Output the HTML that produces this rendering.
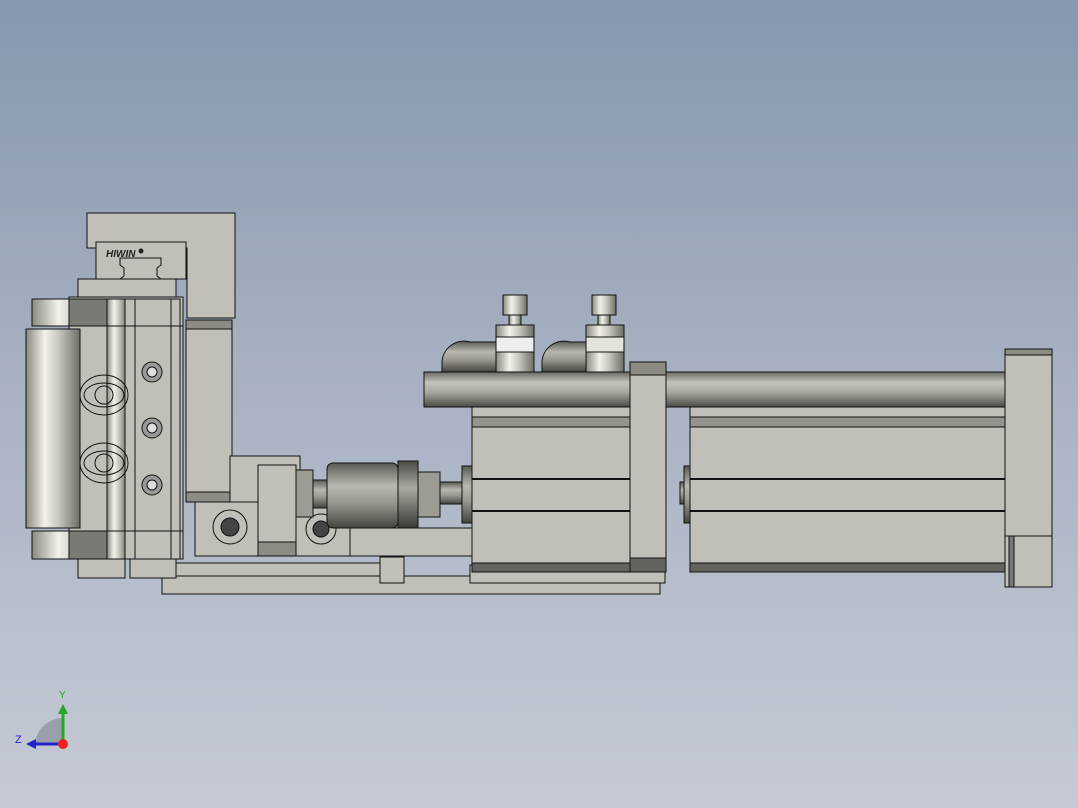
<!DOCTYPE html>
<html><head><style>html,body{margin:0;padding:0}body{width:1078px;height:808px;overflow:hidden;background:linear-gradient(#8797ad,#a9b3c3 50%,#c6cad6)}svg{display:block}</style></head><body>
<svg width="1078" height="808" viewBox="0 0 1078 808" xmlns="http://www.w3.org/2000/svg" font-family="Liberation Sans, sans-serif">
<defs>
<linearGradient id="cv" x1="0" y1="0" x2="1" y2="0"><stop offset="0" stop-color="#8a8a80"/><stop offset=".35" stop-color="#f2f2ea"/><stop offset=".6" stop-color="#c8c8bf"/><stop offset="1" stop-color="#6e6e66"/></linearGradient>
<linearGradient id="ch" x1="0" y1="0" x2="0" y2="1"><stop offset="0" stop-color="#5a5a55"/><stop offset=".35" stop-color="#b8b8b0"/><stop offset=".6" stop-color="#9a9a92"/><stop offset="1" stop-color="#44443f"/></linearGradient>
<linearGradient id="cr" x1="0" y1="0" x2="0" y2="1"><stop offset="0" stop-color="#6a6a64"/><stop offset=".3" stop-color="#c4c4bc"/><stop offset=".6" stop-color="#a4a49c"/><stop offset="1" stop-color="#4a4a45"/></linearGradient>
<linearGradient id="cd" x1="0" y1="0" x2="0" y2="1"><stop offset="0" stop-color="#4a4a46"/><stop offset=".4" stop-color="#aaaaa2"/><stop offset="1" stop-color="#3a3a36"/></linearGradient>
</defs>
<g stroke="#111" stroke-width="1">
<rect x="162" y="576" width="498" height="18" fill="#c0c0b8"/>
<rect x="176" y="563" width="204" height="13" fill="#c0c0b8"/>
<rect x="380" y="557" width="24" height="26" fill="#c0c0b8"/>
<rect x="470" y="565" width="195" height="18" fill="#c0c0b8"/>
<rect x="78" y="557" width="47" height="21" fill="#c0c0b8"/>
<rect x="130" y="557" width="46" height="21" fill="#c0c0b8"/>
<path d="M87 213H235V318H187V248H87Z" fill="#c0c0b8"/>
<rect x="96" y="242" width="90" height="37" fill="#c0c0b8"/>
<text x="106" y="257" font-size="10" font-style="italic" font-weight="bold" fill="#222" stroke="none">HIWIN</text>
<circle cx="141" cy="251" r="2.5" fill="#222" stroke="none"/>
<path d="M120 258H161V265L157 268V276L161 279V288H120V279L124 276V268L120 265Z" fill="#c0c0b8"/>
<rect x="78" y="279" width="98" height="18" fill="#c0c0b8"/>
<rect x="186" y="320" width="46" height="182" fill="#c0c0b8"/>
<rect x="186" y="320" width="46" height="9" fill="#8c8c84"/>
<rect x="186" y="492" width="46" height="10" fill="#8c8c84"/>
<rect x="230" y="456" width="70" height="100" fill="#c0c0b8"/>
<rect x="195" y="502" width="101" height="54" fill="#c0c0b8"/>
<rect x="258" y="465" width="38" height="91" fill="#c0c0b8"/>
<rect x="258" y="542" width="38" height="14" fill="#8c8c84"/>
<circle cx="230" cy="527" r="17" fill="none"/><circle cx="230" cy="527" r="9" fill="#444"/>
<rect x="296" y="502" width="54" height="54" fill="#c0c0b8"/>
<circle cx="321" cy="529" r="15" fill="none"/><circle cx="321" cy="529" r="8" fill="#444"/>
<rect x="350" y="528" width="122" height="28" fill="#c0c0b8"/>
<rect x="69" y="297" width="114" height="262" fill="#c0c0b8"/>
<rect x="32" y="299" width="75" height="27" fill="url(#cv)"/>
<rect x="69" y="299" width="38" height="27" fill="#7a7a74"/>
<rect x="32" y="531" width="75" height="28" fill="url(#cv)"/>
<rect x="69" y="531" width="38" height="28" fill="#7a7a74"/>
<rect x="107" y="299" width="20" height="260" fill="url(#cv)"/>
<rect x="26" y="329" width="54" height="199" fill="url(#cv)"/>
<rect x="125" y="299" width="55" height="260" fill="#c0c0b8"/>
<line x1="135" y1="299" x2="135" y2="559"/><line x1="171" y1="299" x2="171" y2="559"/>
<line x1="69" y1="326" x2="183" y2="326"/><line x1="69" y1="531" x2="183" y2="531"/>
<ellipse cx="104" cy="395" rx="24" ry="20" fill="none"/><ellipse cx="104" cy="395" rx="20" ry="12" fill="none"/><circle cx="104" cy="395" r="9" fill="none"/>
<ellipse cx="104" cy="463" rx="24" ry="20" fill="none"/><ellipse cx="104" cy="463" rx="20" ry="12" fill="none"/><circle cx="104" cy="463" r="9" fill="none"/>
<g fill="#999"><circle cx="152" cy="372" r="10"/><circle cx="152" cy="428" r="10"/><circle cx="152" cy="485" r="10"/></g>
<g fill="#ddd"><circle cx="152" cy="372" r="5"/><circle cx="152" cy="428" r="5"/><circle cx="152" cy="485" r="5"/></g>
<rect x="296" y="470" width="17" height="47" fill="#9c9c94"/>
<rect x="313" y="480" width="14" height="28" fill="url(#ch)"/>
<rect x="327" y="463" width="71" height="65" rx="6" fill="url(#ch)"/>
<rect x="398" y="461" width="20" height="67" fill="url(#cd)"/>
<rect x="418" y="472" width="22" height="45" fill="#9c9c94"/>
<rect x="440" y="482" width="32" height="22" fill="url(#ch)"/>
<rect x="462" y="466" width="10" height="57" fill="url(#ch)"/>
<rect x="680" y="482" width="12" height="22" fill="url(#ch)"/>
<rect x="684" y="466" width="8" height="57" fill="url(#ch)"/>
<path d="M442 372V362A22 22 0 0 1 470 342H500V372Z" fill="url(#ch)"/>
<path d="M542 372V362A22 22 0 0 1 570 342H592V372Z" fill="url(#ch)"/>
<rect x="503" y="295" width="24" height="20" fill="url(#cv)"/>
<rect x="509" y="315" width="12" height="10" fill="url(#cv)"/>
<rect x="496" y="325" width="38" height="12" fill="url(#cv)"/>
<rect x="496" y="337" width="38" height="15" fill="#eee"/>
<rect x="496" y="352" width="38" height="20" fill="url(#cv)"/>
<rect x="592" y="295" width="24" height="20" fill="url(#cv)"/>
<rect x="598" y="315" width="12" height="10" fill="url(#cv)"/>
<rect x="586" y="325" width="38" height="12" fill="url(#cv)"/>
<rect x="586" y="337" width="38" height="15" fill="#e4e4dc"/>
<rect x="586" y="352" width="38" height="20" fill="url(#cv)"/>
<rect x="472" y="407" width="158" height="165" fill="#c0c0b8"/>
<rect x="472" y="417" width="158" height="10" fill="#94948c"/>
<rect x="472" y="563" width="158" height="9" fill="#64645e"/>
<line x1="472" y1="479" x2="630" y2="479" stroke-width="2"/><line x1="472" y1="511" x2="630" y2="511" stroke-width="2"/>
<rect x="690" y="407" width="315" height="165" fill="#c0c0b8"/>
<rect x="690" y="417" width="315" height="10" fill="#94948c"/>
<rect x="690" y="563" width="315" height="9" fill="#64645e"/>
<line x1="690" y1="479" x2="1005" y2="479" stroke-width="2"/><line x1="690" y1="511" x2="1005" y2="511" stroke-width="2"/>
<rect x="424" y="372" width="581" height="35" fill="url(#cr)"/>
<rect x="630" y="362" width="36" height="210" fill="#c0c0b8"/>
<rect x="630" y="362" width="36" height="13" fill="#8c8c84"/>
<rect x="630" y="558" width="36" height="14" fill="#64645e"/>
<rect x="1005" y="349" width="47" height="238" fill="#c0c0b8"/>
<rect x="1005" y="349" width="47" height="6" fill="#8c8c84"/>
<line x1="1005" y1="536" x2="1052" y2="536"/>
<rect x="1009" y="536" width="5" height="51" fill="#777"/>
</g>
<path d="M63 718A28 28 0 0 0 35 744H63Z" fill="#9aa0aa"/>
<line x1="63" y1="744" x2="63" y2="712" stroke="#2a2" stroke-width="3"/>
<path d="M58 714L63 704L68 714Z" fill="#2a2"/>
<line x1="63" y1="744" x2="34" y2="744" stroke="#22c" stroke-width="3"/>
<path d="M36 739L26 744L36 749Z" fill="#22c"/>
<circle cx="63" cy="744" r="5" fill="#e22"/>
<text x="59" y="698" font-size="10" fill="#2a2">Y</text>
<text x="15" y="743" font-size="11" fill="#22c">Z</text>
</svg>
</body></html>
